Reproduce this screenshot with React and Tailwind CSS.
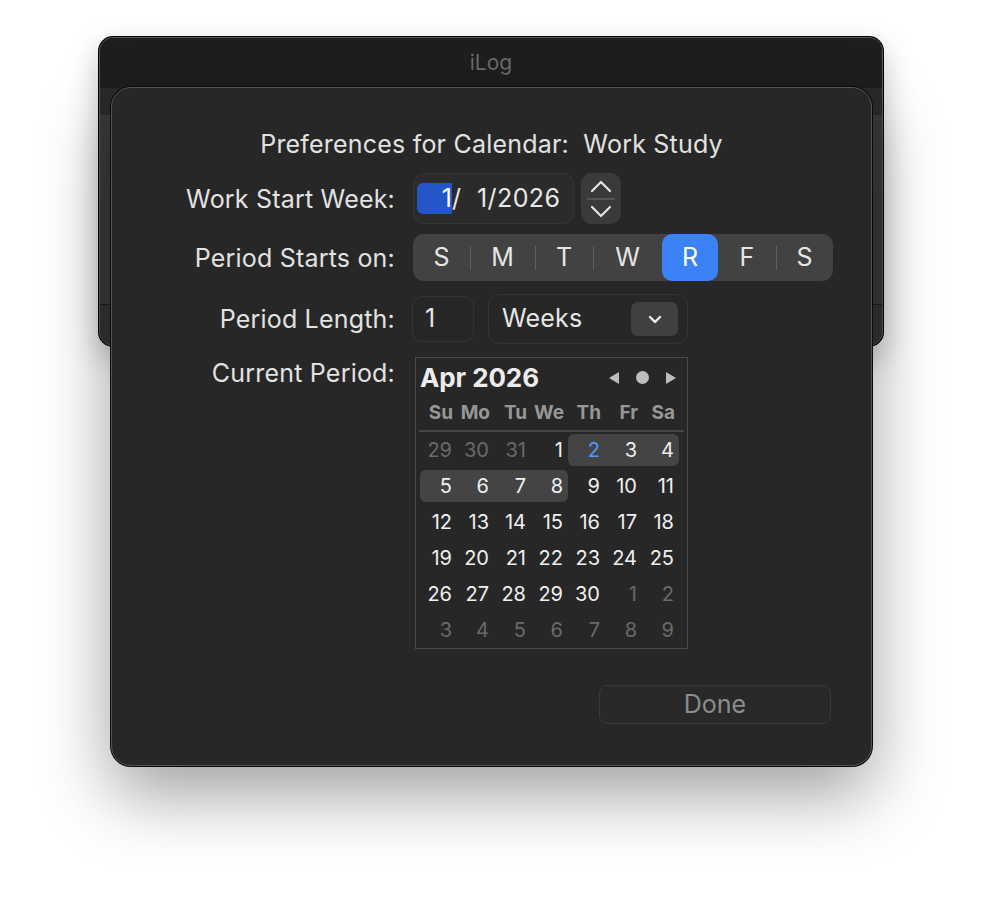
import React from 'react';

const days = [
  [[29, 'o'], [30, 'o'], [31, 'o'], [1, ''], [2, 't'], [3, ''], [4, '']],
  [[5, ''], [6, ''], [7, ''], [8, ''], [9, ''], [10, ''], [11, '']],
  [[12, ''], [13, ''], [14, ''], [15, ''], [16, ''], [17, ''], [18, '']],
  [[19, ''], [20, ''], [21, ''], [22, ''], [23, ''], [24, ''], [25, '']],
  [[26, ''], [27, ''], [28, ''], [29, ''], [30, ''], [1, 'o'], [2, 'o']],
  [[3, 'o'], [4, 'o'], [5, 'o'], [6, 'o'], [7, 'o'], [8, 'o'], [9, 'o']],
];

// current period: Thu 2 .. Wed 8
const inPeriod = (r, c) => (r === 0 && c >= 4) || (r === 1 && c <= 3);

const weekdays = ['Su', 'Mo', 'Tu', 'We', 'Th', 'Fr', 'Sa'];
const segments = [
  { l: 'S', w: 'w-[57px]' },
  { l: 'M', w: 'w-[65px]' },
  { l: 'T', w: 'w-[58px]' },
  { l: 'W', w: 'w-[69px]' },
  { l: 'R', w: 'w-[56px]' },
  { l: 'F', w: 'w-[58px]' },
  { l: 'S', w: 'w-[57px]' },
];

function MiniCalendar() {
  return (
    <div className="w-[273px] h-[292px] border border-[#4a4a4a] flex flex-col">
      {/* header */}
      <div className="h-[38px] flex items-center pl-[4px] pr-[10px]">
        <span className="text-[26px] font-bold text-[#ececec] tracking-[-0.1px]">Apr 2026</span>
        <div className="ml-auto flex items-center gap-[16px] pt-[1px]">
          <svg width="12" height="14" viewBox="0 0 12 14"><path d="M11 1 L1 7 L11 13 Z" fill="#bdbdbd" /></svg>
          <div className="w-[13px] h-[13px] rounded-full bg-[#bdbdbd]" />
          <svg width="12" height="14" viewBox="0 0 12 14"><path d="M1 1 L11 7 L1 13 Z" fill="#bdbdbd" /></svg>
        </div>
      </div>
      {/* weekdays */}
      <div className="grid grid-cols-[repeat(7,37px)] pl-[4px] h-[35px] items-center">
        {weekdays.map((d) => (
          <div key={d} className="text-right pr-[4px] text-[19px] font-bold text-[#979797]">{d}</div>
        ))}
      </div>
      <div className="mx-[3px] h-[2px] bg-[#464646]" />
      {/* days */}
      <div className="flex flex-col pl-[4px]">
        {days.map((row, r) => (
          <div key={r} className="grid grid-cols-[repeat(7,37px)] h-[36px] items-center">
            {row.map(([n, k], c) => {
              const hl = inPeriod(r, c);
              const first = hl && (c === 0 || !inPeriod(r, c - 1));
              const last = hl && (c === 6 || !inPeriod(r, c + 1));
              return (
                <div
                  key={c}
                  className={`h-[32px] flex items-center justify-end pr-[5px] text-[20px] ${
                    hl ? 'bg-[#444444]' : ''
                  } ${first ? 'rounded-l-[6px]' : ''} ${last ? 'rounded-r-[6px]' : ''} ${
                    k === 'o' ? 'text-[#6a6a6a]' : k === 't' ? 'text-[#4b9bff]' : 'text-[#f0f0f0]'
                  }`}
                >
                  {n}
                </div>
              );
            })}
          </div>
        ))}
      </div>
    </div>
  );
}

function Row({ label, children, className = '', labelClass = 'items-center' }) {
  return (
    <div className={`flex ${className}`}>
      <div className={`w-[283px] flex justify-end ${labelClass}`}>
        <span className="text-[25px] leading-[30px] tracking-[0.2px] text-[#e2e2e2] whitespace-nowrap">{label}</span>
      </div>
      <div className="pl-[18px] flex items-center">{children}</div>
    </div>
  );
}

export default function App() {
  return (
    <div className="relative w-[984px] h-[914px] bg-white overflow-hidden font-[family-name:Inter,Arial,sans-serif]">
      {/* parent window */}
      <div className="absolute left-[99px] top-[37px] w-[784px] h-[309px] rounded-[14px] overflow-hidden border border-[#5a5a5a] shadow-[0_0_0_1px_#000,0_12px_30px_rgba(0,0,0,0.25)] flex flex-col bg-[#333333]">
        <div className="h-[50px] bg-[#1e1e1e] flex items-center justify-center">
          <span className="text-[21px] text-[#6b6b6b]">iLog</span>
        </div>
        <div className="h-[27px] bg-[#2a2a2a]" />
        <div className="h-[190px] bg-[#3a3a3a] border-b border-[#1b1b1b]" />
        <div className="flex-1 bg-[#333333]" />
      </div>

      {/* sheet */}
      <div className="absolute left-[111px] top-[87px] w-[761px] h-[679px] rounded-[20px] bg-[#272727] border border-[#555555] shadow-[0_0_0_1px_#0a0a0a,0_28px_70px_rgba(0,0,0,0.38)] flex flex-col">
        <div className="pt-[41px] h-[71px] flex justify-center">
          <span className="text-[25px] leading-[30px] tracking-[0.2px] text-[#e2e2e2] whitespace-pre">Preferences for Calendar:  Work Study</span>
        </div>

        <Row label="Work Start Week:" className="mt-[14px] h-[51px]">
          <div className="w-[161px] h-[51px] rounded-[11px] bg-[#2b2b2b] border border-[#363636] flex items-center pl-[3px]">
            <div className="w-[35px] h-[31px] rounded-l-[6px] bg-[#2456c8] flex items-center justify-end">
              <span className="text-[25px] text-white">1</span>
            </div>
            <span className="text-[25px] text-[#e8e8e8]">/</span>
            <span className="text-[25px] text-[#e8e8e8] ml-[16px] tracking-[0.4px]">1/2026</span>
          </div>
          <div className="ml-[7px] w-[40px] h-[51px] rounded-[11px] bg-[#3a3a3a] flex flex-col items-center justify-center">
            <svg width="22" height="14" viewBox="0 0 22 14"><path d="M2 12 L11 3 L20 12" fill="none" stroke="#e4e4e4" strokeWidth="2.2" strokeLinecap="round" strokeLinejoin="round" /></svg>
            <div className="w-[28px] h-[2px] bg-[#555555] my-[5px]" />
            <svg width="22" height="14" viewBox="0 0 22 14"><path d="M2 2 L11 11 L20 2" fill="none" stroke="#e4e4e4" strokeWidth="2.2" strokeLinecap="round" strokeLinejoin="round" /></svg>
          </div>
        </Row>

        <Row label="Period Starts on:" className="mt-[10px] h-[47px]">
          <div className="w-[420px] h-[47px] rounded-[11px] bg-[#424242] flex items-center">
            {segments.map((s, i) => {
              const sel = i === 4;
              const showDiv = i > 0 && i !== 4 && i !== 5;
              return (
                <div key={i} className={`relative ${s.w} h-[47px] flex items-center`}>
                  {showDiv && <div className="absolute left-0 top-[12px] w-[1px] h-[24px] bg-[#606060]" />}
                  <div
                    className={`w-full h-[47px] flex items-center justify-center text-[25px] ${
                      sel ? 'bg-[#3b82f6] rounded-[10px] text-white' : 'text-[#e6e6e6]'
                    }`}
                  >
                    {s.l}
                  </div>
                </div>
              );
            })}
          </div>
        </Row>

        <Row label="Period Length:" className="mt-[13px] h-[50px]">
          <div className="-ml-[1px] w-[62px] h-[46px] rounded-[10px] border border-[#353535] flex items-center pl-[12px]">
            <span className="text-[25px] text-[#e6e6e6]">1</span>
          </div>
          <div className="ml-[14px] w-[200px] h-[50px] rounded-[12px] border border-[#353535] flex items-center pl-[13px] pr-[9px]">
            <span className="text-[25px] tracking-[0.2px] text-[#e6e6e6]">Weeks</span>
            <div className="ml-auto w-[47px] h-[34px] rounded-[7px] bg-[#404040] flex items-center justify-center">
              <svg width="14" height="9" viewBox="0 0 14 9"><path d="M2 2 L7 7 L12 2" fill="none" stroke="#f0f0f0" strokeWidth="2.4" strokeLinecap="round" strokeLinejoin="round" /></svg>
            </div>
          </div>
        </Row>

        <Row label="Current Period:" className="mt-[13px]" labelClass="items-start mt-[1px]">
          <div className="ml-[2px]">
            <MiniCalendar />
          </div>
        </Row>

        <div className="mt-[36px] flex pl-[487px]">
          <div className="w-[232px] h-[39px] rounded-[8px] border border-[#3a3a3a] bg-[#292929] flex items-center justify-center">
            <span className="text-[25px] text-[#8c8c8c]">Done</span>
          </div>
        </div>
      </div>
    </div>
  );
}
